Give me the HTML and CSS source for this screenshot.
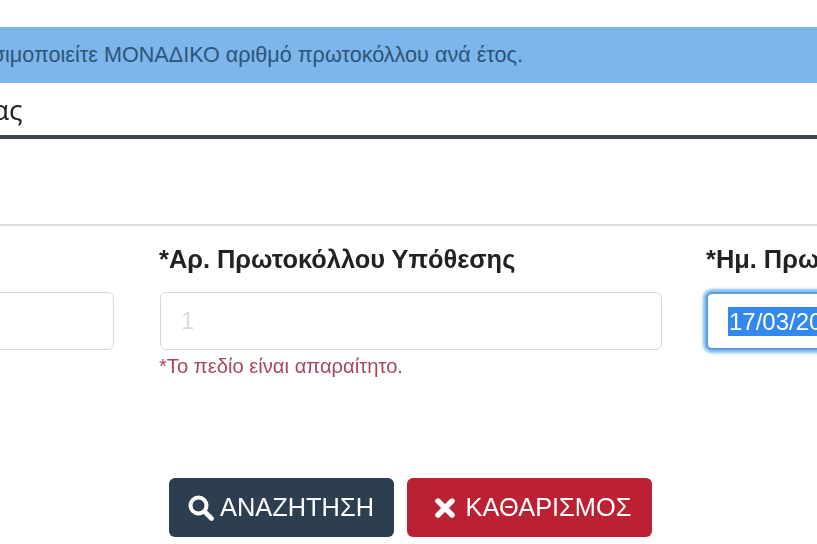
FILE: index.html
```html
<!DOCTYPE html>
<html lang="el">
<head>
    <meta charset="UTF-8">
    <meta name="viewport" content="width=device-width, initial-scale=1.0">
    <title>Υπόθεση</title>
    <link rel="stylesheet" href="styles.css">
</head>
<body>
    <div class="notice"><span class="notice-text">Χρησιμοποιείτε ΜΟΝΑΔΙΚΟ αριθμό πρωτοκόλλου ανά έτος.</span></div>
    <div class="heading"><span class="heading-text">ας</span></div>
    <div class="spacer"></div>

    <div class="fields">
        <div class="field">
            <div class="label">&nbsp;</div>
            <div class="input"></div>
        </div>
        <div class="field">
            <div class="label">*Αρ. Πρωτοκόλλου Υπόθεσης</div>
            <div class="input placeholder">1</div>
            <div class="error">*Το πεδίο είναι απαραίτητο.</div>
        </div>
        <div class="field">
            <div class="label">*Ημ. Πρωτοκόλλου</div>
            <div class="input focused"><span class="selected">17/03/2020</span></div>
        </div>
    </div>

    <div class="buttons">
        <button class="btn btn-search">
            <svg class="icon-search" viewBox="0 0 26 26" aria-hidden="true">
                <circle cx="10.5" cy="10.5" r="8" fill="none" stroke="#fff" stroke-width="4"/>
                <path d="M16.5 16.5L23.5 23.5" fill="none" stroke="#fff" stroke-width="4.6" stroke-linecap="round"/>
            </svg>
            ΑΝΑΖΗΤΗΣΗ
        </button>
        <button class="btn btn-clear">
            <svg class="icon-clear" viewBox="0 0 22 22" aria-hidden="true">
                <path d="M4 4L18 18M18 4L4 18" fill="none" stroke="#fff" stroke-width="5.4" stroke-linecap="round"/>
            </svg>
            ΚΑΘΑΡΙΣΜΟΣ
        </button>
    </div>
</body>
</html>
```

FILE: styles.css
```css
html, body {
    height: 100%;
}
body {
    margin: 0;
    overflow: hidden;
    background-color: #ffffff;
    font-family: "Liberation Sans", Arial, sans-serif;
    color: #222;
    filter: blur(0.4px); /* reference is a soft, rescaled capture */
}

/* Top info bar */
.notice {
    display: flex;
    align-items: center;
    height: 56px;
    margin-top: 27px;
    background-color: #7db6ea;
    overflow: hidden;
}
.notice-text {
    margin-left: -47px;
    font-size: 21.6px;
    color: #2b5578;
    white-space: nowrap;
}

.heading {
    display: flex;
    align-items: center;
    height: 52px;
    border-bottom: 4px solid #3b4754;
    overflow: hidden;
}
.heading-text {
    margin-left: -8px;
    font-family: "Open Sans", sans-serif;
    font-size: 28px;
    color: #222;
}

.spacer {
    height: 85px;
    border-bottom: 2px solid #dedede;
}

/* Form row */
.fields {
    display: grid;
    grid-template-columns: 500px 502px 502px;
    column-gap: 45px;
    margin-left: -385px;
    padding-top: 18px;
    height: 234px;
}
.field:first-child .input {
    margin-right: 1px;
}
.label {
    height: 30px;
    margin: 0 0 18px -1px;
    font-size: 25.4px;
    font-weight: bold;
    line-height: 30px;
    white-space: nowrap;
    color: #222;
}
.input {
    box-sizing: border-box;
    display: flex;
    align-items: center;
    height: 58px;
    padding-left: 20px;
    border: 1.5px solid #d8d8d8;
    border-radius: 6px;
    background-color: #fff;
    font-size: 24px;
}
.placeholder {
    color: #dcdcdc;
}
.focused {
    margin-left: -1px;
    border: 2px solid #5c9fd8;
    box-shadow: 0 0 3px 3px #7fbdf0;
}
.selected {
    padding: 0 1px;
    background-color: #3388ee;
    color: #fff;
    line-height: 29px;
    white-space: nowrap;
}
.error {
    margin: 5px 0 0 -1px;
    font-size: 20.2px;
    color: #a8475c;
}

/* Buttons */
.buttons {
    display: flex;
    justify-content: center;
    gap: 13px;
    padding-left: 3px;
}
.btn {
    display: flex;
    align-items: center;
    justify-content: center;
    height: 59px;
    border: none;
    border-radius: 6px;
    font-family: "Liberation Sans", Arial, sans-serif;
    font-size: 25.4px;
    color: #fff;
}
.btn-search {
    width: 225px;
    gap: 6px;
    background-color: #2c3e50;
}
.btn-clear {
    width: 245px;
    gap: 10px;
    padding-left: 13px;
    background-color: #bb2133;
}
.icon-search {
    width: 26px;
    height: 26px;
}
.icon-clear {
    width: 22px;
    height: 22px;
}
```
